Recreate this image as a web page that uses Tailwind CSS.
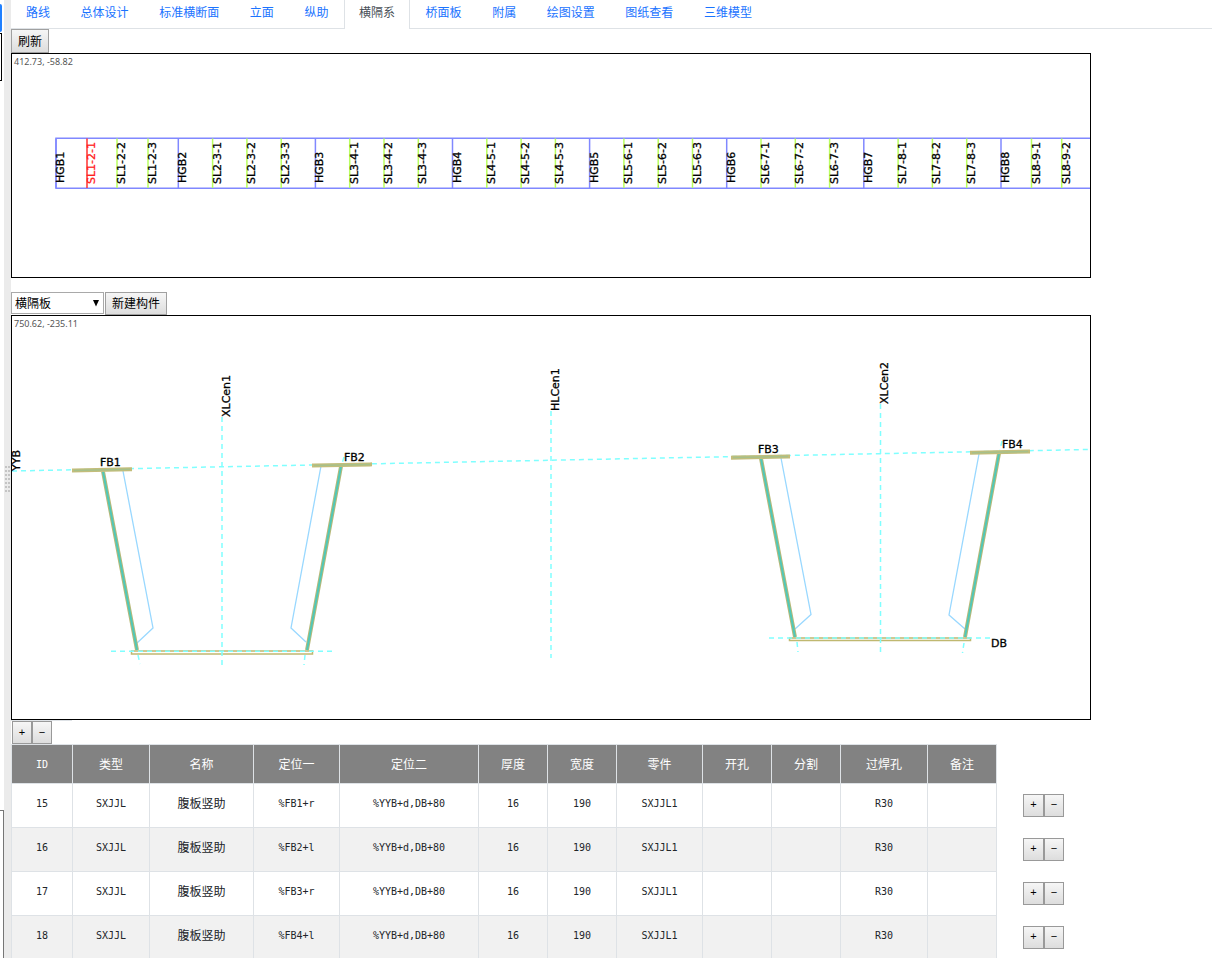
<!DOCTYPE html>
<html lang="zh-CN">
<head>
<meta charset="utf-8">
<title>横隔系</title>
<script src="https://cdn.jsdelivr.net/npm/@tailwindcss/browser@4"></script>
</head>
<body class="bg-white text-[12px] leading-[18px] text-[#212529] font-['Liberation_Sans','Noto_Sans_CJK_SC',sans-serif]">
<div class="flex h-screen overflow-hidden">
  <aside class="flex w-1 shrink-0 flex-col overflow-hidden">
    <div class="mt-1 h-7 w-[2px] rounded-r-sm bg-[#2080ff]"></div>
    <div class="mt-[1px] h-12 w-[2px] border border-l-0 border-black"></div>
    <div class="mt-auto h-[148px] border-t border-r border-[#767676]"></div>
  </aside>
  <div class="flex w-[7px] shrink-0 items-center justify-center bg-[#ebebeb]">
    <svg class="h-7 w-[7px]" viewBox="0 0 7 28" aria-hidden="true"><path d="M2 1V28M5 1V28" stroke="#c4c4c4" stroke-width="2" stroke-dasharray="2 2" fill="none"/></svg>
  </div>
  <main class="min-w-0 flex-1">
    <nav class="flex h-[29px] border-b border-[#dee2e6]">
      <div class="-mb-px flex w-[756px] justify-between whitespace-nowrap text-[#1a73ff]">
        <a href="#" class="border-x border-transparent px-3.5 pt-1">路线</a>
        <a href="#" class="border-x border-transparent px-3.5 pt-1">总体设计</a>
        <a href="#" class="border-x border-transparent px-3.5 pt-1">标准横断面</a>
        <a href="#" class="border-x border-transparent px-3.5 pt-1">立面</a>
        <a href="#" class="border-x border-transparent px-3.5 pt-1">纵助</a>
        <a href="#" class="border-x border-[#dee2e6] bg-white px-3.5 pt-1 text-[#495057]" aria-current="page">横隔系</a>
        <a href="#" class="border-x border-transparent px-3.5 pt-1">桥面板</a>
        <a href="#" class="border-x border-transparent px-3.5 pt-1">附属</a>
        <a href="#" class="border-x border-transparent px-3.5 pt-1">绘图设置</a>
        <a href="#" class="border-x border-transparent px-3.5 pt-1">图纸查看</a>
        <a href="#" class="border-x border-transparent px-3.5 pt-1">三维模型</a>
      </div>
    </nav>
    <button type="button" class="block h-6 border border-[#a0a0a0] bg-linear-to-b from-[#f6f6f6] to-[#dddddd] px-1.5 pt-0.5 text-black">刷新</button>
    <div class="h-[225px] max-w-[1080px] border border-black">
      <svg id="elevation" class="block h-full w-full" viewBox="12 54 1078 223" preserveAspectRatio="xMinYMin slice" font-family="DejaVu Sans, sans-serif" font-size="11" fill="#000">
        <text x="14" y="65" font-family="Noto Sans, sans-serif" font-size="9" fill="#555">412.73, -58.82</text>
        <path d="M1100 138.300H56V188.300H1100" fill="none" stroke="#8088ff" stroke-width="1.500"/>
      </svg>
    </div>
    <div class="mt-3.5 flex items-start pb-px">
      <div class="relative mr-px">
        <select aria-label="构件类型" class="block h-[22px] w-[93px] appearance-none border border-[#a9a9a9] bg-white pt-0.5 pl-[3px] text-black"><option>横隔板</option></select>
        <svg class="pointer-events-none absolute top-2 right-1 h-[7px] w-2" viewBox="0 0 8 7" aria-hidden="true"><path d="M1 0H7L4 6.500Z" fill="#000"/></svg>
      </div>
      <button type="button" class="h-[23px] border border-[#a0a0a0] bg-linear-to-b from-[#f6f6f6] to-[#dddddd] px-1.5 text-black">新建构件</button>
    </div>
    <div class="-mt-px h-[405px] max-w-[1080px] border border-black">
      <svg class="block h-full w-full" viewBox="12 316 1078 403" preserveAspectRatio="xMinYMin slice" font-family="DejaVu Sans, sans-serif" font-size="11" fill="#000">
        <text x="14" y="327" font-family="Noto Sans, sans-serif" font-size="9" fill="#555">750.62, -235.11</text>
        <path d="M131.500 651H312.500V654H131.500ZM789.500 638H970.500V640.500H789.500Z" fill="#fff" stroke="#c0b870" stroke-width="1.500"/>
        <!-- stiffeners -->
        <path d="M123 471L153 628L137 643M321 466L291 628L306 642M781 458L811 614.500L795 629M979 454L949 615L965 629" fill="none" stroke="#99d8ff" stroke-width="1.300"/>
        <!-- reference lines -->
        <g fill="none" stroke="#80ffff" stroke-width="1.500" stroke-dasharray="5 4">
          <path d="M12 471L1088 449.500"/>
          <path d="M222 417V665M551 411V658M880.500 404V652"/>
          <path d="M111 651.300H332M769 638H990"/>
          <path d="M138 655L140 664M305 655L304 665M797 642L798 652M964 643L962.500 653M101 459L103 470M344 457L342 464M759 446L761 457M1002 441L1000 450"/>
        </g>
        <!-- steel plates -->
        <path d="M103 471.500L137 650M341 466.500L307 650M761 458.500L795 637M999 453.500L965 637" fill="none" stroke="#b8b878" stroke-width="4"/>
        <path d="M103 471.500L137 650M341 466.500L307 650M761 458.500L795 637M999 453.500L965 637" fill="none" stroke="#50c8b8" stroke-width="2"/>
        <g fill="none" stroke="#c3bd7a" stroke-width="4" stroke-linecap="square">
          <path d="M74 470.400L130 469.300M314 465.500L370 464.400M733 457.600L788 456.500M972 452.700L1028 451.600"/>
        </g>
        <g fill="none" stroke="#a6c08a" stroke-width="1.500">
          <path d="M74 470.400L130 469.300M314 465.500L370 464.400M733 457.600L788 456.500M972 452.700L1028 451.600"/>
        </g>
        <g stroke="#000" stroke-width="0.300">
          <text x="100" y="466">FB1</text>
          <text x="344" y="461">FB2</text>
          <text x="758" y="453">FB3</text>
          <text x="1002" y="448">FB4</text>
          <text x="991" y="647">DB</text>
          <text transform="translate(20 471) rotate(-90)">YYB</text>
          <text transform="translate(230 417) rotate(-90)">XLCen1</text>
          <text transform="translate(559 411) rotate(-90)">HLCen1</text>
          <text transform="translate(888 404) rotate(-90)">XLCen2</text>
        </g>
      </svg>
    </div>
    <div class="h-px w-[61px] bg-[#dee2e6]"></div>
    <div class="flex pl-px">
      <button type="button" aria-label="添加行" class="h-[23px] w-5 border border-[#999] bg-linear-to-b from-[#f6f6f6] to-[#dddddd] pb-0.5 text-[11px] text-black">+</button>
      <button type="button" aria-label="删除行" class="h-[23px] w-5 border border-[#999] bg-linear-to-b from-[#f6f6f6] to-[#dddddd] pb-0.5 text-[11px] text-black">−</button>
    </div>
    <table class="w-[1054px] table-fixed border-separate border-spacing-0 text-center">
      <colgroup><col class="w-[62px]"><col class="w-[77px]"><col class="w-[104px]"><col class="w-[86px]"><col class="w-[139px]"><col class="w-[69px]"><col class="w-[69px]"><col class="w-[86px]"><col class="w-[69px]"><col class="w-[69px]"><col class="w-[87px]"><col class="w-[69px]"><col class="w-[68px]"></colgroup>
      <thead>
        <tr id="head" class="h-10 text-white"></tr>
      </thead>
      <tbody id="rows"></tbody>
    </table>
  </main>
</div>
<script>
  // Diaphragm (HGB) and stiffener (SL) marks along the girder
  const svg = document.getElementById('elevation');
  const marks = [['HGB1', 56], ['SL1-2-1', 87], ['SL1-2-2', 117], ['SL1-2-3', 148]];
  for (let n = 2; n <= 7; n++) {
    const x = 178.3 + (n - 2) * 137.1;
    marks.push(['HGB' + n, x]);
    for (let k = 1; k <= 3; k++) marks.push([`SL${n}-${n + 1}-${k}`, x + k * 34.3]);
  }
  marks.push(['HGB8', 1001], ['SL8-9-1', 1031.5], ['SL8-9-2', 1061.7]);
  let out = '';
  for (const [name, x] of marks) {
    const main = name.startsWith('H'), active = name === 'SL1-2-1';
    const line = active ? '#ff3030' : main ? '#8088ff' : '#b8ff60';
    const ink = active ? '#ff2020' : '#000';
    out += `<path d="M${x} 138.500V188" stroke="${line}" stroke-width="1.500"/>` +
      `<text transform="translate(${x + 8} ${main ? 183 : 184}) rotate(-90)" fill="${ink}" stroke="${ink}" stroke-width="0.300">${name}</text>`;
  }
  svg.insertAdjacentHTML('beforeend', out);

  const heads = ['ID', '类型', '名称', '定位一', '定位二', '厚度', '宽度', '零件', '开孔', '分割', '过焊孔', '备注'];
  document.getElementById('head').innerHTML = heads.map((h, i) =>
    `<th scope="col" class="border-t border-r border-b border-[#dee2e6] bg-[#828282] pt-0.5 font-normal first:border-l ${i ? '' : "font-['DejaVu_Sans_Mono',monospace] text-[10px]"}">${h}</th>`).join('') + '<td></td>';
  const data = [[15, '%FB1+r'], [16, '%FB2+l'], [17, '%FB3+r'], [18, '%FB4+l']];
  const btn = 'h-[23px] border border-[#999] bg-linear-to-b from-[#f6f6f6] to-[#dddddd] pb-0.5 text-[11px] text-black';
  document.getElementById('rows').innerHTML = data.map(([id, pos]) => {
    const cells = [id, 'SXJJL', '腹板竖助', pos, '%YYB+d,DB+80', 16, 190, 'SXJJL1', '', '', 'R30', ''];
    return '<tr class="group h-11">' + cells.map((c, i) =>
      `<td class="border-r border-b border-[#dee2e6] pb-1 first:border-l group-even:bg-[#f1f1f1] ${i === 2 ? '' : "font-['DejaVu_Sans_Mono',monospace] text-[10px]"}">${c}</td>`).join('') +
      `<td class="pb-0.5"><div class="flex justify-end pr-px"><button type="button" aria-label="添加行" class="${btn} w-[21px]">+</button><button type="button" aria-label="删除行" class="${btn} w-5">−</button></div></td></tr>`;
  }).join('');
</script>
</body>
</html>
